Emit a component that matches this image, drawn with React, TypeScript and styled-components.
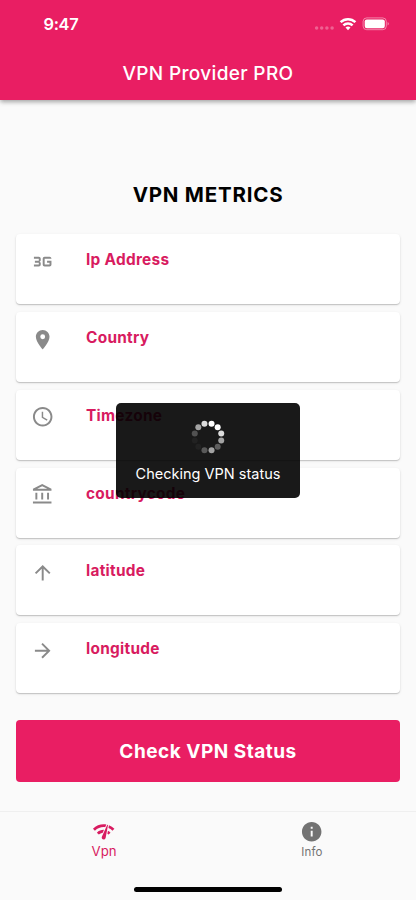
import React from "react";
import styled, { createGlobalStyle } from "styled-components";
import type { IconType } from "react-icons";
import {
  Md3gMobiledata,
  MdPlace,
  MdAccessTime,
  MdOutlineAccountBalance,
  MdArrowUpward,
  MdArrowForward,
  MdNetworkCheck,
  MdInfo,
} from "react-icons/md";

const PINK = "#e91e63";

const GlobalStyle = createGlobalStyle`
  * { box-sizing: border-box; }
  body { margin: 0; background: #fafafa; }
`;

const Screen = styled.div`
  position: relative;
  display: flex;
  flex-direction: column;
  width: 416px;
  height: 900px;
  overflow: hidden;
  background: #fafafa;
  font-family: Inter, "Liberation Sans", sans-serif;
`;

const Header = styled.header`
  flex: none;
  height: 100.3px;
  background: ${PINK};
  color: #fff;
  box-shadow: 0 2px 4px -1px rgba(0, 0, 0, 0.2), 0 3px 4px rgba(0, 0, 0, 0.12),
    0 1px 7px rgba(0, 0, 0, 0.1);
`;

const StatusBar = styled.div`
  display: flex;
  align-items: center;
  justify-content: space-between;
  height: 46px;
  padding: 2px 27px 0 43.5px;
`;

const Clock = styled.time`
  font-size: 16.4px;
  font-weight: 600;
  letter-spacing: -0.3px;
`;

const StatusIcons = styled.svg`
  display: block;
  width: 76px;
  height: 16px;
`;

const AppTitle = styled.h1`
  margin: 0;
  height: 54px;
  line-height: 55px;
  text-align: center;
  font-size: 19px;
  font-weight: 500;
  letter-spacing: 0.34px;
`;

const Heading = styled.h2`
  margin: 79px 0 0;
  height: 32px;
  line-height: 32px;
  text-align: center;
  font-size: 20.5px;
  font-weight: 700;
  letter-spacing: 0.78px;
  color: #000;
`;

const CardList = styled.ul`
  display: flex;
  flex-direction: column;
  gap: 7.75px;
  margin: 23.1px 16px 0;
  padding: 0;
  list-style: none;
`;

const Card = styled.li`
  display: flex;
  height: 70px;
  padding: 15px 15.5px 0 15px;
  border-radius: 4px;
  background: #fff;
  box-shadow: 0 1px 1px rgba(0, 0, 0, 0.17), 0 1px 3px rgba(0, 0, 0, 0.1);
`;

const CardIcon = styled.span`
  display: flex;
  width: 55px;
  padding-top: 0.5px;
  color: #8a8a8a;
  svg { width: 23.4px; height: 23.4px; }
`;

const CardLabel = styled.span`
  line-height: 21px;
  font-size: 15.4px;
  font-weight: 700;
  letter-spacing: 0.28px;
  color: #d81b60;
`;

const CheckButton = styled.button`
  flex: none;
  height: 62px;
  margin: 27px 16px 0;
  border: 0;
  border-radius: 4px;
  background: ${PINK};
  color: #fff;
  font: 700 19px/62px Inter, "Liberation Sans", sans-serif;
  letter-spacing: 0.5px;
  padding: 1px 0 0;
`;

const TabBar = styled.nav`
  display: flex;
  height: 89px;
  margin-top: auto;
  border-top: 1px solid #efefef;
`;

const Tab = styled.a<{ $active?: boolean }>`
  flex: 1;
  display: flex;
  flex-direction: column;
  align-items: center;
  padding-top: ${(p) => (p.$active ? 7.5 : 8)}px;
  color: ${(p) => (p.$active ? "#d81b60" : "#737373")};
  font-size: ${(p) => (p.$active ? 13.2 : 11.5)}px;
  letter-spacing: ${(p) => (p.$active ? -0.05 : 0.15)}px;
  line-height: ${(p) => (p.$active ? 16 : 18)}px;
  svg { width: 23.4px; height: 23.4px; }
`;

const HomeIndicator = styled.div`
  position: absolute;
  left: 134px;
  bottom: 8px;
  width: 148px;
  height: 5px;
  border-radius: 3px;
  background: #000;
`;

const Toast = styled.div`
  position: absolute;
  left: 116px;
  top: 402.5px;
  width: 184px;
  height: 95px;
  display: flex;
  flex-direction: column;
  align-items: center;
  padding-top: 17px;
  border-radius: 5px;
  background: rgba(0, 0, 0, 0.9);
  color: #fff;
`;

const Spinner = styled.svg`
  display: block;
  width: 34px;
  height: 34px;
`;

const ToastText = styled.p`
  margin: 10.5px 0 0;
  line-height: 20px;
  font-size: 14.5px;
  letter-spacing: 0;
  white-space: nowrap;
`;

const metrics: { label: string; icon: IconType }[] = [
  { label: "Ip Address", icon: Md3gMobiledata },
  { label: "Country", icon: MdPlace },
  { label: "Timezone", icon: MdAccessTime },
  { label: "countrycode", icon: MdOutlineAccountBalance },
  { label: "latitude", icon: MdArrowUpward },
  { label: "longitude", icon: MdArrowForward },
];

// Dot opacities, clockwise from just right of the top.
const dots = [1, 1, 0.85, 0.6, 0.3, 0.6, 0.28, 0.04, 0.04, 0.25, 0.6, 0.85];

export default function App() {
  return (
    <>
      <GlobalStyle />
      <Screen>
        <Header>
          <StatusBar>
            <Clock>9:47</Clock>
            <StatusIcons viewBox="0 0 76 16" fill="#fff">
              {[3.6, 8.7, 13.9, 19.1].map((x) => (
                <circle key={x} cx={x} cy={12} r={1.75} opacity={0.3} />
              ))}
              <g fill="none" stroke="#fff" strokeWidth="2.5">
                <path d="M27.6 6.2a10.6 10.6 0 0 1 14.8 0" />
                <path d="M30.4 9.3a6.6 6.6 0 0 1 9.2 0" />
              </g>
              <path d="M35 14.2l-2.5-2.6a3.6 3.6 0 0 1 5 0z" />
              <rect x="50.1" y="1.9" width="23.2" height="11.8" rx="3.6" fill="none" stroke="#fff" opacity="0.45" />
              <rect x="51.7" y="3.4" width="20.1" height="8.8" rx="2.2" />
              <path d="M74.6 6v3.5q1.2-.5 1.2-1.75t-1.2-1.75z" opacity="0.5" />
            </StatusIcons>
          </StatusBar>
          <AppTitle>VPN Provider PRO</AppTitle>
        </Header>
        <Heading>VPN METRICS</Heading>
        <CardList>
          {metrics.map(({ label, icon: Icon }) => (
            <Card key={label}>
              <CardIcon><Icon /></CardIcon>
              <CardLabel>{label}</CardLabel>
            </Card>
          ))}
        </CardList>
        <CheckButton>Check VPN Status</CheckButton>
        <TabBar>
          <Tab $active><MdNetworkCheck />Vpn</Tab>
          <Tab><MdInfo />Info</Tab>
        </TabBar>
        <HomeIndicator />
        <Toast>
          <Spinner viewBox="-17 -17 34 34">
            {dots.map((opacity, i) => {
              const angle = ((i * 30 + 15 - 90) * Math.PI) / 180;
              return (
                <circle key={i} cx={13.7 * Math.cos(angle)} cy={13.7 * Math.sin(angle)} r={3} fill="#fff" opacity={opacity} />
              );
            })}
          </Spinner>
          <ToastText>Checking VPN status</ToastText>
        </Toast>
      </Screen>
    </>
  );
}
